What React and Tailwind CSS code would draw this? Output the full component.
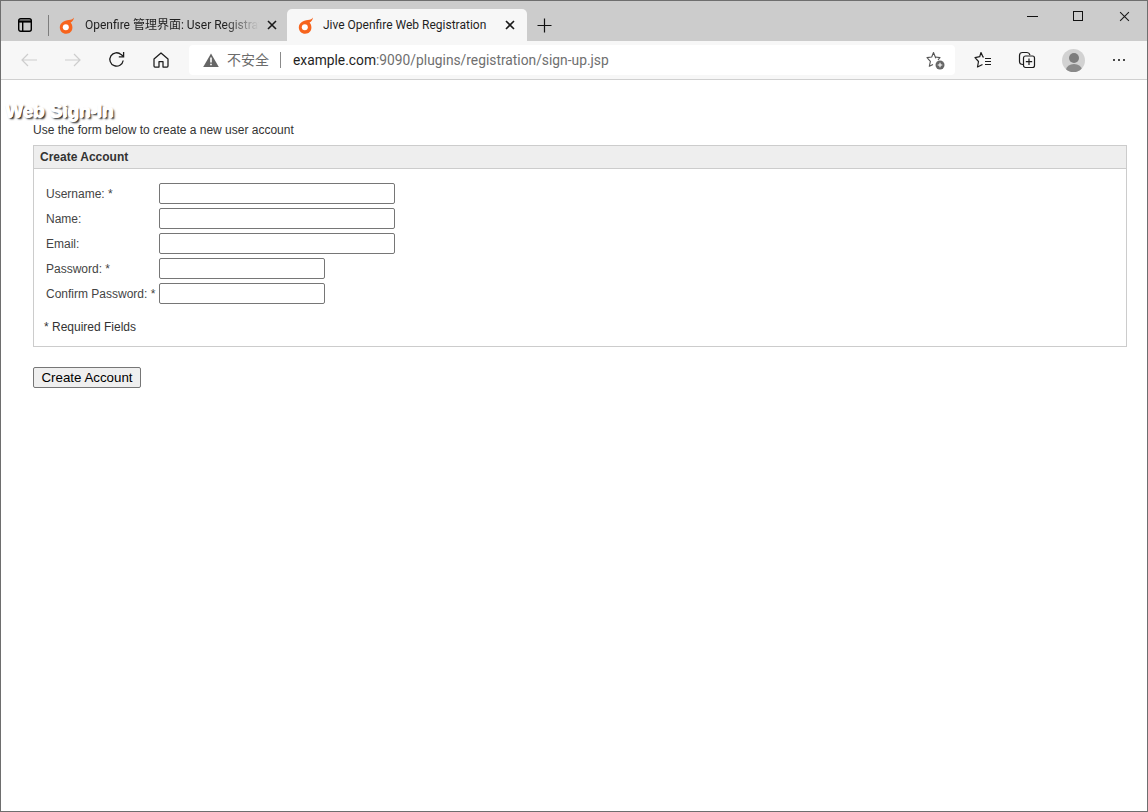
const Flame = () => (
  <svg width="16" height="17" viewBox="0 0 16 17" className="shrink-0">
    <path d="M15 0.5C14.3 1.8 12.9 2.4 11.5 2.7C7.5 3 1 4.6 0.8 10.2C0.7 14 3.6 16.7 7.2 16.7C11 16.7 13.6 13.8 13.4 10.2C13.3 8.4 12.6 6.8 11.6 5.6C13.4 4.6 14.8 2.8 15 0.5Z" fill="#f7641d" />
    <circle cx="6.8" cy="10.2" r="3" fill="#ffffff" />
  </svg>
);

const X = ({ size = 10, w = 1.6 }) => (
  <svg width={size} height={size} viewBox="0 0 10 10" fill="none" stroke="#1a1a1a" strokeWidth={w}>
    <path d="M1 1L9 9M9 1L1 9" />
  </svg>
);

const Field = ({ label, wide }) => (
  <div className="flex h-[25px] items-center">
    <label className="w-[125px] shrink-0 whitespace-nowrap pl-[12px] text-[#444444]">{label}</label>
    <input
      type="text"
      className={`h-[21px] rounded-[2px] border border-[#767676] bg-white ${wide ? "w-[236px]" : "w-[166px]"}`}
    />
  </div>
);

export default function App() {
  return (
    <div className="flex h-[812px] w-[1148px] flex-col overflow-hidden border border-[#6e6e6e] bg-white font-['Liberation_Sans',sans-serif]">
      <div className="flex h-[40px] shrink-0 items-end bg-[#cccccc] font-['Roboto','Noto_Sans_CJK_SC',sans-serif] text-[12px] text-[#1f1f1f]">
        <div className="flex h-[32px] w-[48px] shrink-0 items-center justify-between pl-[17px]">
          <svg width="14" height="14" viewBox="0 0 14 14" fill="none" stroke="#000" strokeWidth="1.4">
            <rect x="0.7" y="0.7" width="12.6" height="12.6" rx="2" />
            <path d="M0.7 3.5H13.3" strokeWidth="2.2" />
            <path d="M4.7 3.7V13.3" />
          </svg>
          <div className="h-[21px] w-px bg-[#7d7d7d]" />
        </div>
        <div className="flex h-[32px] w-[238px] shrink-0 items-center pl-[10px]">
          <Flame />
          <span className="ml-[10px] w-[174px] overflow-hidden whitespace-nowrap [mask-image:linear-gradient(to_right,black_80%,transparent)]">Openfire 管理界面: User Registration</span>
          <span className="ml-[8px]"><X /></span>
        </div>
        <div className="flex h-[32px] w-[240px] shrink-0 items-center rounded-t-[5px] bg-[#f7f7f7] pl-[11px]">
          <Flame />
          <span className="ml-[9px] w-[176px] overflow-hidden whitespace-nowrap">Jive Openfire Web Registration</span>
          <span className="ml-[6px]"><X /></span>
        </div>
        <div className="ml-[9px] flex h-[32px] w-[16px] items-center justify-center">
          <svg width="15" height="15" viewBox="0 0 15 15" stroke="#111" strokeWidth="1.2">
            <path d="M7.5 0.5V14.5M0.5 7.5H14.5" />
          </svg>
        </div>
        <div className="ml-auto flex h-[39px] self-start">
          <div className="flex h-[30px] w-[45px] items-center justify-center">
            <div className="h-px w-[11px] bg-[#111]" />
          </div>
          <div className="flex h-[30px] w-[45px] items-center justify-center">
            <div className="h-[10px] w-[10px] border border-[#111]" />
          </div>
          <div className="ml-px flex h-[30px] w-[46px] items-center justify-center">
            <X size={11} w={1} />
          </div>
        </div>
      </div>

      <div className="flex h-[39px] shrink-0 items-center border-b border-[#d0d0d0] bg-[#f7f7f7]">
        <div className="ml-[20px] flex w-[168px] items-center">
          <svg width="16" height="14" viewBox="0 0 16 14" fill="none" stroke="#cdcdcd" strokeWidth="1.2">
            <path d="M16 7H1M7 1L1 7L7 13" />
          </svg>
          <svg className="ml-[28px]" width="16" height="14" viewBox="0 0 16 14" fill="none" stroke="#cdcdcd" strokeWidth="1.2">
            <path d="M0 7H15M9 1L15 7L9 13" />
          </svg>
          <svg className="ml-[27px]" width="18" height="18" viewBox="0 0 18 18" fill="none" stroke="#1c1c1c" strokeWidth="1.3">
            <path d="M15.2 9.5A6.7 6.7 0 1 1 13.2 3.6L15.4 5.6" />
            <path d="M15.6 1V5.8H10.8" />
          </svg>
          <svg className="ml-[27px]" width="16" height="16" viewBox="0 0 16 16" fill="none" stroke="#1c1c1c" strokeWidth="1.25">
            <path d="M1 7L8 1L15 7V14A1 1 0 0 1 14 15H10V9.5H6V15H2A1 1 0 0 1 1 14Z" strokeLinejoin="round" />
          </svg>
        </div>
        <div className="flex h-[30px] w-[766px] items-center rounded-[4px] bg-white pl-[14px] font-['Roboto','Noto_Sans_CJK_SC',sans-serif] text-[14px]">
          <svg width="16" height="14" viewBox="0 0 16 14">
            <path d="M8 0.5L15.8 14H0.2Z" fill="#666666" />
            <path d="M7.2 4.5H8.8V9.5H7.2ZM7.2 10.7H8.8V12.3H7.2Z" fill="#ffffff" />
          </svg>
          <span className="ml-[8px] text-[#6b6b6b]">不安全</span>
          <div className="ml-[11px] h-[16px] w-px bg-[#8a8a8a]" />
          <span className="ml-[12px] whitespace-nowrap text-[13.8px] text-[#1f1f1f]">
            example.com<span className="text-[#6f6f6f]">:9090/plugins/registration/sign-up.jsp</span>
          </span>
          <svg className="ml-auto mr-[10px]" width="19" height="19" viewBox="0 0 19 19" fill="none">
            <path d="M9.8 7.2L9.3 6L7.5 1.5L5.7 6L1 6.6L4.4 10.3L3.3 15.3L7 13.5" stroke="#555" strokeWidth="1.1" strokeLinejoin="round" />
            <path d="M9.3 6L14 6.6L12 8.8" stroke="#555" strokeWidth="1.1" strokeLinejoin="round" />
            <circle cx="14" cy="14" r="4.5" fill="#666666" />
            <path d="M14 11.7V16.3M11.7 14H16.3" stroke="#fff" strokeWidth="1.1" />
          </svg>
        </div>
        <svg className="ml-[19px]" width="18" height="18" viewBox="0 0 18 18" fill="none" stroke="#1c1c1c" strokeWidth="1.2">
          <path d="M9.8 6.2L9 6L7 1.5L5.7 5.7L1 6.7L4.5 10.5L3.5 16L8.5 13.5" strokeLinejoin="round" />
          <path d="M11 7.5H17M11 10.5H17M11 13.5H17" />
        </svg>
        <svg className="ml-[26px]" width="18" height="18" viewBox="0 0 18 18" fill="none" stroke="#1c1c1c" strokeWidth="1.2">
          <path d="M5 13.5C3 13.5 1.5 12.5 1.5 10.5V4.5C1.5 2.5 2.7 1.5 4.5 1.5H9C10.5 1.5 11.5 2.5 12 4" />
          <rect x="5.5" y="5" width="11" height="11.5" rx="2" />
          <path d="M11 7.5V14M7.8 10.7H14.2" />
        </svg>
        <div className="relative ml-[26px] h-[23px] w-[23px] overflow-hidden rounded-full bg-[#d2d2d2]">
          <div className="absolute left-[6.5px] top-[4px] h-[10px] w-[10px] rounded-full bg-[#7d7d7d]" />
          <div className="absolute left-[3.5px] top-[15px] h-[12px] w-[16px] rounded-[50%] bg-[#8a8a8a]" />
        </div>
        <div className="ml-[28px] flex gap-[3px]">
          <div className="h-[2px] w-[2px] rounded-full bg-[#111]" />
          <div className="h-[2px] w-[2px] rounded-full bg-[#111]" />
          <div className="h-[2px] w-[2px] rounded-full bg-[#111]" />
        </div>
      </div>

      <div className="flex-1 text-[12px] text-[#333333]">
        <h1 className="ml-[4px] mt-[20px] h-[23px] whitespace-nowrap text-[18.8px] font-bold leading-[22px] text-white [text-shadow:1px_0_0_#ffffff,0_1px_0_#ffffff,2px_2px_2px_#111111]">
          Web Sign-In
        </h1>
        <div className="ml-[32px] mr-[20px]">
          <p className="h-[22px] leading-[15px] text-[#333333]">Use the form below to create a new user account</p>
          <div className="h-[202px] border border-[#cccccc]">
            <div className="h-[23px] border-b border-[#cccccc] bg-[#eeeeee] pl-[6px] font-bold leading-[22px]">Create Account</div>
            <div className="flex flex-col pt-[12px]">
              <Field label="Username: *" wide />
              <Field label="Name:" wide />
              <Field label="Email:" wide />
              <Field label="Password: *" />
              <Field label="Confirm Password: *" />
              <p className="ml-[10px] mt-[12px]">* Required Fields</p>
            </div>
          </div>
          <button className="mt-[20px] h-[21px] w-[108px] rounded-[2px] border border-[#767676] bg-[#efefef] font-['Liberation_Sans',sans-serif] text-[13.33px] text-black">
            Create Account
          </button>
        </div>
      </div>
    </div>
  );
}
